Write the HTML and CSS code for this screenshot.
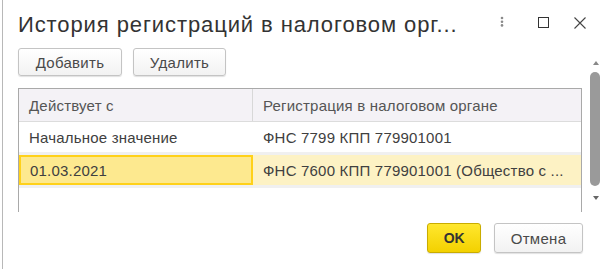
FILE: index.html
```html
<!DOCTYPE html>
<html lang="ru">
  <head>
    <meta charset="UTF-8" />
    <meta name="viewport" content="width=device-width, initial-scale=1.0" />
    <title>История регистраций в налоговом органе</title>
    <link rel="stylesheet" href="styles.css">
  </head>
  <body>
    <div class="window">
      <div class="titlebar">
        <h1 class="title">История регистраций в налоговом орг...</h1>
        <div class="controls">
          <svg class="ico more" width="14" height="14" viewBox="0 0 14 14">
            <circle cx="7" cy="2" r="1.3" fill="#8a8a8a" />
            <circle cx="7" cy="5.7" r="1.3" fill="#8a8a8a" />
            <circle cx="7" cy="9.4" r="1.3" fill="#8a8a8a" />
          </svg>
          <svg class="ico" width="14" height="14" viewBox="0 0 14 14">
            <rect x="1.5" y="1.5" width="10" height="10" fill="none" stroke="#333" stroke-width="1" />
          </svg>
          <svg class="ico" width="14" height="14" viewBox="0 0 14 14">
            <path d="M1.5 1.5 L12.5 12.5 M12.5 1.5 L1.5 12.5" stroke="#444" stroke-width="1.1" />
          </svg>
        </div>
      </div>

      <div class="toolbar">
        <button class="btn btn-add">Добавить</button>
        <button class="btn btn-del">Удалить</button>
      </div>

      <div class="grid-area">
        <div class="grid">
          <div class="row head">
            <div class="cell c1">Действует с</div>
            <div class="cell c2">Регистрация в налоговом органе</div>
          </div>
          <div class="row">
            <div class="cell c1">Начальное значение</div>
            <div class="cell c2">ФНС 7799 КПП 779901001</div>
          </div>
          <div class="row selected">
            <div class="cell c1 current">01.03.2021</div>
            <div class="cell c2">ФНС 7600 КПП 779901001 (Общество с ...</div>
          </div>
        </div>
        <div class="scrollbar">
          <span class="arrow up"></span>
          <span class="thumb"></span>
          <span class="arrow down"></span>
        </div>
      </div>

      <div class="footer">
        <button class="btn btn-ok">OK</button>
        <button class="btn btn-cancel">Отмена</button>
      </div>
    </div>
  </body>
</html>
```

FILE: styles.css
```css
html, body {
  margin: 0;
  padding: 0;
  background: #fff;
}
body {
  font-family: Arial, "Liberation Sans", sans-serif;
  color: #333;
}
.window {
  width: 600px;
  height: 269px;
  margin-left: 2px;
  border-left: 1px solid #b8b8b8;
  padding-left: 15px;
  box-sizing: border-box;
}
.titlebar {
  display: flex;
  align-items: center;
  height: 48px;
  padding-top: 1px;
  box-sizing: border-box;
}
.title {
  margin: 0;
  font-size: 22px;
  letter-spacing: 0.9px;
  font-weight: normal;
  color: #333;
  flex: 1;
  white-space: nowrap;
}
.controls {
  display: flex;
  gap: 22px;
  margin-right: 15px;
  margin-top: -4px;
}
.ico {
  display: block;
}
.ico.more {
  margin-right: 6px;
}
.toolbar {
  display: flex;
  gap: 11px;
  height: 40px;
}
.btn {
  font-family: Arial, "Liberation Sans", sans-serif;
  font-size: 15px;
  letter-spacing: 0.3px;
  color: #4a4a4a;
  height: 28px;
  border: 1px solid #c4c4c4;
  border-radius: 3px;
  background: linear-gradient(#ffffff, #f2f2f2);
  box-shadow: 0 1px 1px rgba(0, 0, 0, 0.12);
  padding: 0;
  cursor: pointer;
}
.btn-add {
  width: 104px;
}
.btn-del {
  width: 93px;
}
.grid-area {
  display: flex;
  height: 124px;
}
.grid {
  width: 564px;
  border: 1px solid #a9a9a9;
  border-bottom: none;
  box-sizing: border-box;
}
.row {
  display: flex;
  height: 30px;
  border-bottom: 3px solid #f0f0f0;
  font-size: 15px;
  letter-spacing: 0.2px;
  color: #404040;
}
.row.head {
  height: 32px;
  background: #f4f2f6;
  border-bottom: 1px solid #dcdcdc;
  color: #555;
}
.cell {
  display: flex;
  align-items: center;
  box-sizing: border-box;
  padding-left: 10px;
  white-space: nowrap;
}
.c1 {
  width: 234px;
}
.c2 {
  flex: 1;
}
.head .c1 {
  border-right: 1px solid #d8d8d8;
}
.selected {
  background: #fdf2c4;
}
.current {
  background: #fde98f;
  border: 2px solid #ffd11a;
  padding-left: 9px;
}
.scrollbar {
  position: relative;
  width: 19px;
}
.thumb {
  position: absolute;
  left: 8px;
  top: -16px;
  width: 10px;
  height: 114px;
  border-radius: 5px;
  background: #9a9a9a;
}
.arrow {
  position: absolute;
  left: 11px;
  width: 0;
  height: 0;
  border-left: 3px solid transparent;
  border-right: 3px solid transparent;
}
.arrow.up {
  top: -27px;
  border-bottom: 4px solid #888;
}
.arrow.down {
  top: 108px;
  border-top: 4px solid #666;
}
.footer {
  display: flex;
  justify-content: flex-end;
  gap: 13px;
  padding-right: 19px;
  padding-top: 11px;
}
.btn-ok {
  width: 54px;
  height: 30px;
  font-weight: bold;
  font-size: 14px;
  letter-spacing: -0.3px;
  color: #333;
  border-color: #c9ac00;
  background: linear-gradient(#ffe72e, #f3d100);
}
.btn-cancel {
  width: 89px;
  height: 30px;
}
```
